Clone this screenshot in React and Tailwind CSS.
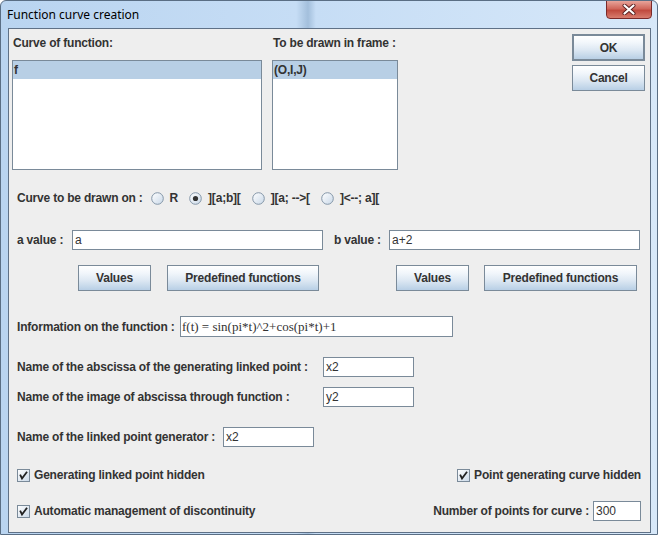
import React from 'react'

const font = "font-['Liberation_Sans',Arial,sans-serif]"
const label = 'text-[12px] font-bold text-[#333333] leading-[14px] whitespace-nowrap tracking-[-0.2px]'
const btn = 'flex items-center justify-center border border-[#7a8a99] bg-[linear-gradient(180deg,#ffffff_0%,#f1f6fb_30%,#dde8f3_60%,#b8cfe5_100%)] text-[12px] font-bold text-[#333333] tracking-[-0.2px]'
const field = 'h-[20px] border border-[#7a8a99] bg-white pl-[2px] text-[12px] text-[#333333] leading-[18px] whitespace-nowrap overflow-hidden'

function Radio({ checked, text, first }) {
  return (
    <div className={`flex items-center ${first ? 'ml-[8px]' : 'ml-[11px]'}`}>
      <svg width="13" height="13" viewBox="0 0 13 13">
        <defs>
          <linearGradient id="rg" x1="0" y1="0" x2="1" y2="1">
            <stop offset="0" stopColor="#ffffff" />
            <stop offset="1" stopColor="#c9d8e8" />
          </linearGradient>
        </defs>
        <circle cx="6.5" cy="6.5" r="5.8" fill="url(#rg)" stroke="#8496a8" strokeWidth="1" />
        {checked && <circle cx="6.5" cy="6.5" r="2.6" fill="#333333" />}
      </svg>
      <span className={`${label} ml-[6px]`}>{text}</span>
    </div>
  )
}

function Check({ text }) {
  return (
    <div className="flex items-center">
      <svg width="13" height="13" viewBox="0 0 13 13">
        <defs>
          <linearGradient id="cg" x1="0" y1="0" x2="1" y2="1">
            <stop offset="0" stopColor="#ffffff" />
            <stop offset="1" stopColor="#c9d8e8" />
          </linearGradient>
        </defs>
        <rect x="0.5" y="0.5" width="12" height="12" fill="url(#cg)" stroke="#7a8a99" />
        <path d="M3.5 6.5 L5 9.5 L9.5 3.5" fill="none" stroke="#222222" strokeWidth="1.8" strokeLinecap="square" />
      </svg>
      <span className={`${label} ml-[4px]`}>{text}</span>
    </div>
  )
}

function ListBox({ width, item }) {
  return (
    <div className={`${width} h-[110px] border border-[#7a8a99] bg-white`}>
      <div className={`h-[18px] bg-[#b8cfe5] pl-[1px] ${label} leading-[18px]`}>{item}</div>
    </div>
  )
}

export default function App() {
  return (
    <div className={`${font} w-[658px] h-[535px] overflow-hidden rounded-t-[6px] border border-[#5a6e84] bg-[linear-gradient(90deg,#b9d4f0_0%,#c6ddf5_45%,#a3bfdc_46.8%,#c6ddf5_48%,#d7e8f9_100%)]`}>
      <div className="flex h-[27px] items-start">
        <span className="ml-[6px] mt-[6px] text-[12px] text-black font-['Noto_Sans',sans-serif] leading-[16px]">Function curve creation</span>
        <div className="ml-auto mr-[5px] mt-[-1px] flex h-[19px] w-[46px] items-center justify-center rounded-b-[4px] border border-[#7a2a2a] bg-[linear-gradient(180deg,#e8a49a_0%,#d0675b_45%,#c04a3e_55%,#d87c6e_100%)]">
          <svg width="14" height="11" viewBox="0 0 14 11">
            <path d="M2.5 1.5 L11.5 9.5 M11.5 1.5 L2.5 9.5" stroke="#5a2020" strokeWidth="4" strokeLinecap="round" />
            <path d="M2.5 1.5 L11.5 9.5 M11.5 1.5 L2.5 9.5" stroke="#ffffff" strokeWidth="2.2" strokeLinecap="round" />
          </svg>
        </div>
      </div>

      <div className="ml-[7px] mr-[6px] h-[505px] border border-[#5f7187] bg-[#eeeeee]">
        {/* lists + OK/Cancel */}
        <div className="mt-[5px] flex">
          <div className="ml-[3px] flex flex-col">
            <div className={`${label} mt-[2px] ml-[1px]`}>Curve of function:</div>
            <div className="mt-[10px]"><ListBox width="w-[250px]" item="f" /></div>
          </div>
          <div className="ml-[10px] flex flex-col">
            <div className={`${label} mt-[2px] ml-[1px]`}>To be drawn in frame :</div>
            <div className="mt-[10px]"><ListBox width="w-[126px]" item="(O,I,J)" /></div>
          </div>
          <div className="ml-auto mr-[5px] flex flex-col">
            <div className={`${btn} h-[27px] w-[73px] border-2 border-[#7a8a99]`}>OK</div>
            <div className={`${btn} mt-[4px] h-[26px] w-[73px]`}>Cancel</div>
          </div>
        </div>

        {/* interval */}
        <div className="mt-[20px] flex h-[16px] items-center">
          <span className={`${label} ml-[8px]`}>Curve to be drawn on :</span>
          <Radio first text="R" />
          <Radio checked text="][a;b][" />
          <Radio text="][a; -->[" />
          <Radio text="]<--; a][" />
        </div>

        {/* a / b values */}
        <div className="mt-[24px] flex h-[20px] items-center">
          <span className={`${label} ml-[8px] w-[55px]`}>a value :</span>
          <div className={`${field} w-[251px]`}>a</div>
          <span className={`${label} ml-[11px] w-[55px]`}>b value :</span>
          <div className={`${field} w-[251px]`}>a+2</div>
        </div>

        <div className="mt-[15px] flex h-[26px]">
          <div className={`${btn} ml-[69px] w-[73px]`}>Values</div>
          <div className={`${btn} ml-[16px] w-[152px]`}>Predefined functions</div>
          <div className={`${btn} ml-[77px] w-[73px]`}>Values</div>
          <div className={`${btn} ml-[15px] w-[153px]`}>Predefined functions</div>
        </div>

        {/* information */}
        <div className="mt-[25px] flex h-[21px] items-center">
          <span className={`${label} ml-[8px] w-[163px]`}>Information on the function :</span>
          <div className="h-[21px] w-[273px] border border-[#7a8a99] bg-white pl-[1px] font-['Liberation_Serif',serif] text-[13px] leading-[19px] text-[#333333]">f(t) = sin(pi*t)^2+cos(pi*t)+1</div>
        </div>

        <div className="mt-[20px] flex h-[20px] items-center">
          <span className={`${label} ml-[8px] w-[306px]`}>Name of the abscissa of the generating linked point :</span>
          <div className={`${field} w-[91px]`}>x2</div>
        </div>
        <div className="mt-[10px] flex h-[20px] items-center">
          <span className={`${label} ml-[8px] w-[306px]`}>Name of the image of abscissa through function :</span>
          <div className={`${field} w-[91px]`}>y2</div>
        </div>
        <div className="mt-[20px] flex h-[20px] items-center">
          <span className={`${label} ml-[8px] w-[206px]`}>Name of the linked point generator :</span>
          <div className={`${field} w-[91px]`}>x2</div>
        </div>

        {/* options */}
        <div className="mt-[20px] flex h-[16px] items-center justify-between pl-[8px] pr-[9px]">
          <Check text="Generating linked point hidden" />
          <Check text="Point generating curve hidden" />
        </div>
        <div className="mt-[18px] flex h-[20px] items-center justify-between pl-[8px] pr-[9px]">
          <Check text="Automatic management of discontinuity" />
          <div className="flex items-center">
            <span className={`${label} mr-[4px]`}>Number of points for curve :</span>
            <div className={`${field} w-[48px]`}>300</div>
          </div>
        </div>
      </div>
    </div>
  )
}
